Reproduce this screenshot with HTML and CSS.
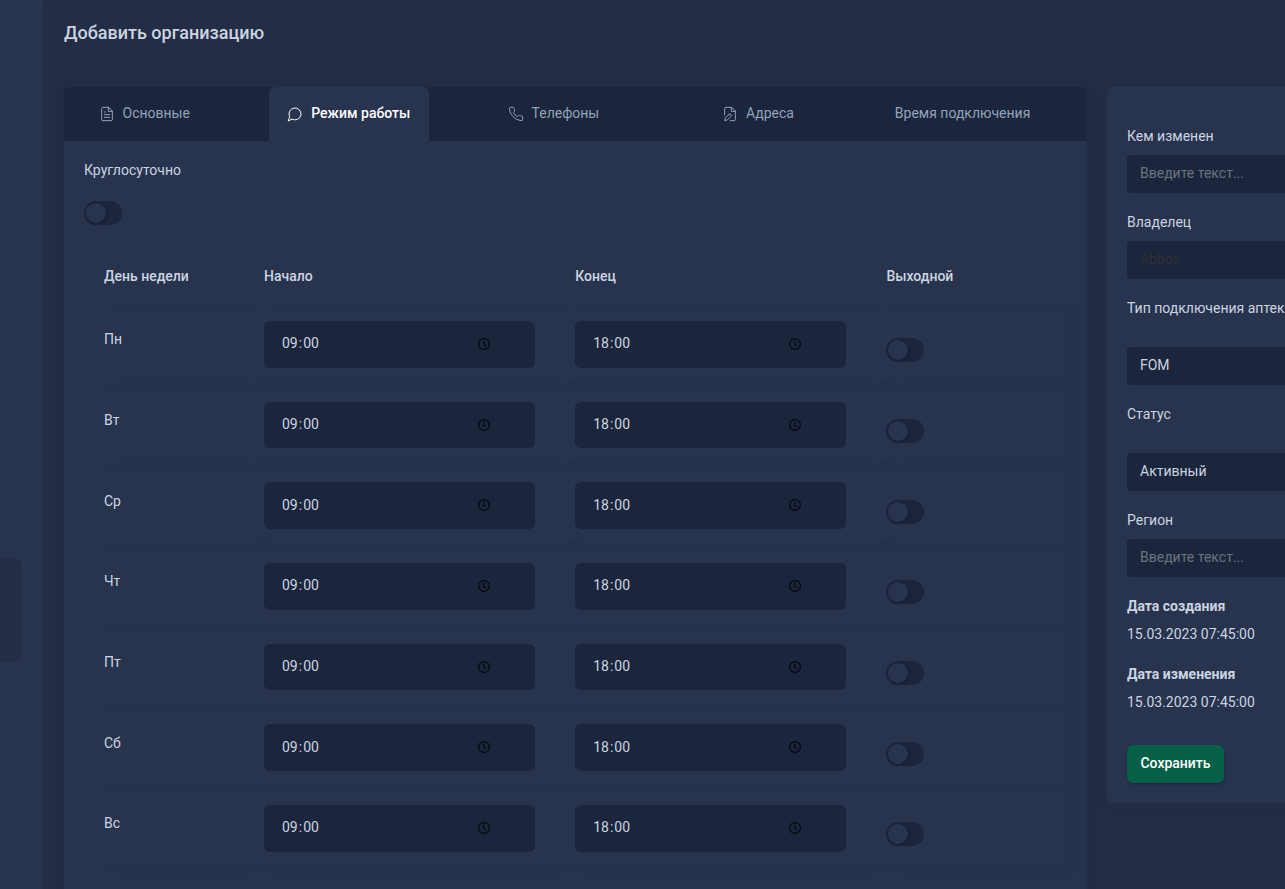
FILE: index.html
```html
<!DOCTYPE html>
<html lang="ru">
<head>
    <meta charset="UTF-8">
    <meta name="viewport" content="width=device-width, initial-scale=1.0">
    <title>Добавить организацию</title>
    <link rel="stylesheet" href="styles.css">
</head>
<body>
    <svg class="sprite">
        <symbol id="clock" viewBox="0 0 14 14">
            <circle cx="7" cy="7" r="5.4" />
            <path d="M6.7 3.8v3.4l2.3 1.8" />
        </symbol>
    </svg>

    <div class="app">
        <nav class="side-nav">
            <div class="side-nav-active"></div>
        </nav>

        <main class="content">
            <h2 class="page-title">Добавить организацию</h2>

            <div class="columns">
                <section class="post">
                    <ul class="tabs">
                        <li class="tab">
                            <button class="tab-link">
                                <svg class="icon" viewBox="0 0 24 24"><path d="M14.5 2H6a2 2 0 0 0-2 2v16a2 2 0 0 0 2 2h12a2 2 0 0 0 2-2V7.5L14.5 2z" /><path d="M14 2v6h6M16 13H8M16 17H8M10 9H8" /></svg>
                                Основные
                            </button>
                        </li>
                        <li class="tab">
                            <button class="tab-link active">
                                <svg class="icon" viewBox="0 0 24 24"><path d="M7.9 20A9 9 0 1 0 4 16.1L2 22z" /></svg>
                                Режим работы
                            </button>
                        </li>
                        <li class="tab">
                            <button class="tab-link">
                                <svg class="icon" viewBox="0 0 24 24"><path d="M22 16.92v3a2 2 0 0 1-2.18 2 19.79 19.79 0 0 1-8.63-3.07 19.5 19.5 0 0 1-6-6 19.79 19.79 0 0 1-3.07-8.67A2 2 0 0 1 4.11 2h3a2 2 0 0 1 2 1.72 12.84 12.84 0 0 0 .7 2.81 2 2 0 0 1-.45 2.11L8.09 9.91a16 16 0 0 0 6 6l1.27-1.27a2 2 0 0 1 2.11-.45 12.84 12.84 0 0 0 2.81.7A2 2 0 0 1 22 16.92z" /></svg>
                                Телефоны
                            </button>
                        </li>
                        <li class="tab">
                            <button class="tab-link">
                                <svg class="icon" viewBox="0 0 24 24"><path d="M4 13.5V4a2 2 0 0 1 2-2h8.5L20 7.5V20a2 2 0 0 1-2 2h-5.5" /><path d="M14 2v6h6M10.42 12.61a2.1 2.1 0 1 1 2.97 2.97L7.95 21 4 22l.99-3.95 5.43-5.44z" /></svg>
                                Адреса
                            </button>
                        </li>
                        <li class="tab">
                            <button class="tab-link">Время подключения</button>
                        </li>
                    </ul>

                    <div class="panel">
                        <label class="label">Круглосуточно</label>
                        <div class="switch"></div>

                        <div class="schedule">
                            <div class="head">
                                <div>День недели</div>
                                <div>Начало</div>
                                <div>Конец</div>
                                <div>Выходной</div>
                            </div>
                            <div class="row">
                                <div class="cell day">Пн</div>
                                <div class="cell"><div class="time"><span>09<i>:</i>00</span><svg class="clock"><use href="#clock" /></svg></div></div>
                                <div class="cell"><div class="time"><span>18<i>:</i>00</span><svg class="clock"><use href="#clock" /></svg></div></div>
                                <div class="cell"><div class="switch"></div></div>
                            </div>
                            <div class="row">
                                <div class="cell day">Вт</div>
                                <div class="cell"><div class="time"><span>09<i>:</i>00</span><svg class="clock"><use href="#clock" /></svg></div></div>
                                <div class="cell"><div class="time"><span>18<i>:</i>00</span><svg class="clock"><use href="#clock" /></svg></div></div>
                                <div class="cell"><div class="switch"></div></div>
                            </div>
                            <div class="row">
                                <div class="cell day">Ср</div>
                                <div class="cell"><div class="time"><span>09<i>:</i>00</span><svg class="clock"><use href="#clock" /></svg></div></div>
                                <div class="cell"><div class="time"><span>18<i>:</i>00</span><svg class="clock"><use href="#clock" /></svg></div></div>
                                <div class="cell"><div class="switch"></div></div>
                            </div>
                            <div class="row">
                                <div class="cell day">Чт</div>
                                <div class="cell"><div class="time"><span>09<i>:</i>00</span><svg class="clock"><use href="#clock" /></svg></div></div>
                                <div class="cell"><div class="time"><span>18<i>:</i>00</span><svg class="clock"><use href="#clock" /></svg></div></div>
                                <div class="cell"><div class="switch"></div></div>
                            </div>
                            <div class="row">
                                <div class="cell day">Пт</div>
                                <div class="cell"><div class="time"><span>09<i>:</i>00</span><svg class="clock"><use href="#clock" /></svg></div></div>
                                <div class="cell"><div class="time"><span>18<i>:</i>00</span><svg class="clock"><use href="#clock" /></svg></div></div>
                                <div class="cell"><div class="switch"></div></div>
                            </div>
                            <div class="row">
                                <div class="cell day">Сб</div>
                                <div class="cell"><div class="time"><span>09<i>:</i>00</span><svg class="clock"><use href="#clock" /></svg></div></div>
                                <div class="cell"><div class="time"><span>18<i>:</i>00</span><svg class="clock"><use href="#clock" /></svg></div></div>
                                <div class="cell"><div class="switch"></div></div>
                            </div>
                            <div class="row">
                                <div class="cell day">Вс</div>
                                <div class="cell"><div class="time"><span>09<i>:</i>00</span><svg class="clock"><use href="#clock" /></svg></div></div>
                                <div class="cell"><div class="time"><span>18<i>:</i>00</span><svg class="clock"><use href="#clock" /></svg></div></div>
                                <div class="cell"><div class="switch"></div></div>
                            </div>
                        </div>
                    </div>
                </section>

                <aside class="info">
                    <div class="field">
                        <label class="label">Кем изменен</label>
                        <input class="control" type="text" placeholder="Введите текст...">
                    </div>
                    <div class="field">
                        <label class="label">Владелец</label>
                        <input class="control" type="text" value="Abbos" disabled>
                    </div>
                    <div class="field field-select">
                        <label class="label">Тип подключения аптеки</label>
                        <div class="control">FOM</div>
                    </div>
                    <div class="field field-select">
                        <label class="label">Статус</label>
                        <div class="control">Активный</div>
                    </div>
                    <div class="field">
                        <label class="label">Регион</label>
                        <input class="control" type="text" placeholder="Введите текст...">
                    </div>
                    <div class="date">
                        <strong>Дата создания</strong>
                        <span>15.03.2023 07:45:00</span>
                    </div>
                    <div class="date">
                        <strong>Дата изменения</strong>
                        <span>15.03.2023 07:45:00</span>
                    </div>
                    <button class="save-btn">Сохранить</button>
                </aside>
            </div>
        </main>
    </div>
</body>
</html>
```
FILE: styles.css
```css
* {
    margin: 0;
    padding: 0;
    box-sizing: border-box;
}

body {
    font-family: Roboto, sans-serif;
    font-size: 14px;
    line-height: 20px;
    color: #cbd5e1;
    background: #28334e;
    overflow: hidden;
}

button,
input {
    font: inherit;
    color: inherit;
    border: none;
}

.sprite {
    display: none;
}

.app {
    display: flex;
    height: 100vh;
    overflow: hidden;
}

.side-nav {
    flex: 0 0 42px;
    padding-top: 558px;
}

.side-nav-active {
    width: 22px;
    height: 104px;
    background: #232d45;
    border-radius: 0 8px 8px 0;
}

.content {
    flex: 0 0 1400px;
    padding: 19px 22px 0;
    background: #232d45;
    border-radius: 4px 0 0 0;
}

.page-title {
    font-size: 18px;
    font-weight: 500;
    line-height: 28px;
}

.columns {
    display: flex;
    align-items: flex-start;
    gap: 20px;
    margin-top: 40px;
}

.post {
    flex: 0 0 1023px;
    background: #28334e;
    border-radius: 6px;
    box-shadow: 0 3px 20px rgba(0, 0, 0, 0.04);
}

.tabs {
    display: flex;
    list-style: none;
    background: #1b253b;
    border-radius: 6px 6px 0 0;
}

.tab {
    flex: 1;
}

.tab-link {
    display: flex;
    align-items: center;
    justify-content: center;
    width: 160.4px;
    height: 54px;
    padding-bottom: 2px;
    white-space: nowrap;
    color: #94a3b8;
    background: none;
    cursor: pointer;
}

.tab-link.active {
    color: #fff;
    font-weight: 500;
    background: #28334e;
    border-radius: 6px 6px 0 0;
}

.icon {
    width: 16px;
    height: 16px;
    margin: 2px 8px 0 0;
    fill: none;
    stroke: currentColor;
    stroke-width: 1.5;
    stroke-linecap: round;
    stroke-linejoin: round;
}

.panel {
    padding: 19px 20px 40px;
}

.label {
    display: block;
}

.switch {
    width: 38px;
    height: 24px;
    padding: 2px;
    background: #1b253b;
    border-radius: 12px;
}

.switch::before {
    content: "";
    display: block;
    width: 20px;
    height: 20px;
    background: #28334e;
    border-radius: 50%;
    box-shadow: 1px 1px 3px rgba(0, 0, 0, 0.25);
}

.panel > .switch {
    margin-top: 21px;
}

.schedule {
    display: flex;
    flex-direction: column;
    gap: 10px;
    margin-top: 29px;
}

.head,
.row {
    display: grid;
    grid-template-columns: 160px 311.2px 311.2px 1fr;
}

.head {
    height: 45px;
    font-weight: 500;
    line-height: 44px;
}

.head div {
    padding-left: 20px;
}

.cell {
    height: 70.67px;
    padding: 12px 20px;
    background: #28334e;
    box-shadow: 20px 3px 20px rgba(0, 0, 0, 0.025);
}

.cell:first-child {
    border-radius: 6px 0 0 6px;
}

.cell:last-child {
    border-radius: 0 6px 6px 0;
}

.cell .switch {
    margin-top: 17.3px;
}

.cell.day {
    padding-top: 20.3px;
}

.time {
    display: flex;
    align-items: center;
    justify-content: space-between;
    height: 46.67px;
    padding: 0 44px 2px 18px;
    background: #1b253b;
    border-radius: 6px;
}

.time i {
    padding: 0 1px;
    font-style: normal;
}

.clock {
    width: 14px;
    height: 14px;
    margin-top: 1.5px;
    fill: none;
    stroke: #05070c;
    stroke-width: 1.2;
}

.info {
    flex: 0 0 320px;
    height: 716px;
    padding: 39px 20px 20px;
    background: #28334e;
    border-radius: 6px;
    box-shadow: 0 3px 20px rgba(0, 0, 0, 0.04);
}

.field {
    margin-bottom: 19px;
}

.control {
    display: block;
    width: 100%;
    height: 38px;
    margin-top: 9px;
    padding: 8px 13px 10px;
    background: #1b253b;
    border-radius: 4px;
}

.field-select .control {
    margin-top: 29px;
}

.control::placeholder {
    color: #6b7280;
}

.control:disabled {
    color: #2d3036;
}

.date {
    margin-bottom: 20px;
}

.date strong,
.date span {
    display: block;
}

.date strong {
    margin-bottom: 8px;
    font-weight: 700;
}

.save-btn {
    display: block;
    width: 97px;
    height: 38px;
    margin-top: 33px;
    padding-bottom: 2px;
    color: #fff;
    font-weight: 500;
    background: #065f46;
    border-radius: 6px;
    box-shadow: 0 1px 3px rgba(0, 0, 0, 0.3);
    cursor: pointer;
}
```
